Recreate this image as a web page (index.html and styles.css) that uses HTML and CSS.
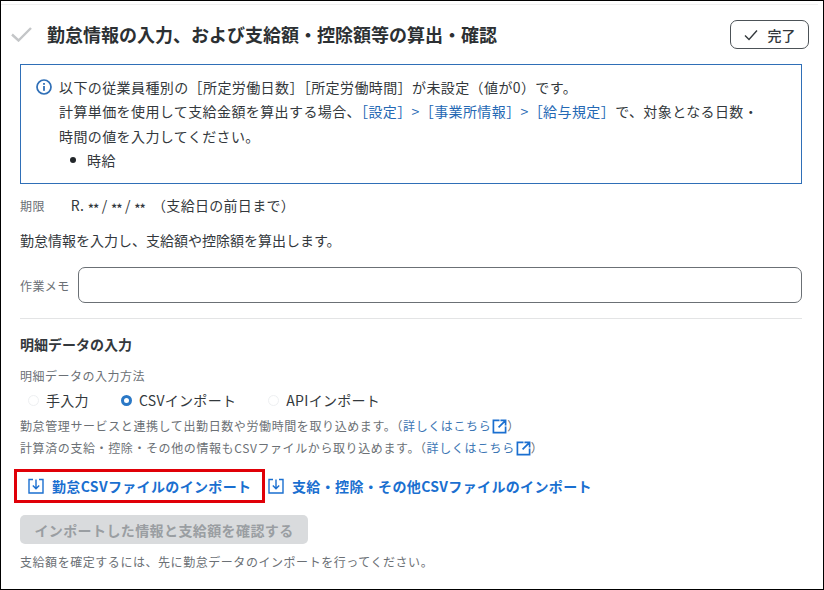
FILE: index.html
```html
<!DOCTYPE html>
<html lang="ja">
<head>
<meta charset="utf-8">
<title>勤怠情報の入力</title>
<link rel="stylesheet" href="styles.css">
</head>
<body>
<main class="frame">
  <header class="task-header">
    <svg class="task-check" viewBox="0 0 21 15" width="21" height="15"><path d="M1 7.5 L7.5 13.5 L20 1" fill="none" stroke="#c4c6c8" stroke-width="2.4"/></svg>
    <h1 class="task-title">勤怠情報の入力、および支給額・控除額等の算出・確認</h1>
    <button class="done-btn" type="button">
      <svg viewBox="0 0 14 12" width="14" height="12"><path d="M1 6.5 L5 10.5 L13 1.5" fill="none" stroke="#33383c" stroke-width="1.4"/></svg>
      <span>完了</span>
    </button>
  </header>

  <section class="notice">
    <svg class="notice-icon" viewBox="0 0 16 16" width="16" height="16"><circle cx="8" cy="8" r="7" fill="none" stroke="#2f6fb7" stroke-width="1.7"/><rect x="7.1" y="7" width="1.8" height="4.8" fill="#2f6fb7"/><rect x="7.1" y="4" width="1.8" height="1.8" fill="#2f6fb7"/></svg>
    <div class="notice-body">
      <p>以下の従業員種別の［所定労働日数］［所定労働時間］が未設定（値が0）です。</p>
      <p>計算単価を使用して支給金額を算出する場合、<a href="#">［設定］&gt;［事業所情報］&gt;［給与規定］</a>で、対象となる日数・<br>時間の値を入力してください。</p>
      <ul class="notice-list"><li>時給</li></ul>
    </div>
  </section>

  <div class="deadline">
    <span class="field-label">期限</span>
    <span class="deadline-value">R. <span class="mask">**</span> / <span class="mask">**</span> / <span class="mask">**</span>　（支給日の前日まで）</span>
  </div>
  <p class="lead">勤怠情報を入力し、支給額や控除額を算出します。</p>

  <div class="memo">
    <label class="field-label" for="memo">作業メモ</label>
    <input class="memo-input" id="memo" type="text">
  </div>

  <hr class="divider">

  <h2 class="section-title">明細データの入力</h2>
  <div class="method-label">明細データの入力方法</div>
  <div class="radios">
    <label class="radio"><span class="dot"></span>手入力</label>
    <label class="radio"><span class="dot is-on"></span>CSVインポート</label>
    <label class="radio"><span class="dot"></span>APIインポート</label>
  </div>
  <p class="help">勤怠管理サービスと連携して出勤日数や労働時間を取り込めます。（<a href="#">詳しくはこちら<svg class="ext" viewBox="0 0 16 16" width="16" height="16"><path d="M8 1.5 H1.5 V14.5 H14.5 V8 M9 1.5 H14.5 V7 M14 2 L7 9" fill="none" stroke="#1a6fd0" stroke-width="1.8"/></svg></a>）</p>
  <p class="help">計算済の支給・控除・その他の情報もCSVファイルから取り込めます。（<a href="#">詳しくはこちら<svg class="ext" viewBox="0 0 16 16" width="16" height="16"><path d="M8 1.5 H1.5 V14.5 H14.5 V8 M9 1.5 H14.5 V7 M14 2 L7 9" fill="none" stroke="#1a6fd0" stroke-width="1.8"/></svg></a>）</p>

  <div class="imports">
    <a class="import-link is-marked" href="#">
      <svg viewBox="0 0 16 16" width="16" height="16"><path d="M5 1.5 H1 V15 H15 V1.5 H11 M8 1.5 V10.5 M4.8 7.5 L8 10.8 L11.2 7.5" fill="none" stroke="#1a6fd0" stroke-width="1.4"/></svg>
      勤怠CSVファイルのインポート
    </a>
    <a class="import-link" href="#">
      <svg viewBox="0 0 16 16" width="16" height="16"><path d="M5 1.5 H1 V15 H15 V1.5 H11 M8 1.5 V10.5 M4.8 7.5 L8 10.8 L11.2 7.5" fill="none" stroke="#1a6fd0" stroke-width="1.4"/></svg>
      支給・控除・その他CSVファイルのインポート
    </a>
  </div>

  <button class="confirm-btn" type="button" disabled>インポートした情報と支給額を確認する</button>
  <p class="foot">支給額を確定するには、先に勤怠データのインポートを行ってください。</p>
</main>
</body>
</html>
```

FILE: styles.css
```css
* { box-sizing: border-box; }
html, body { margin: 0; height: 100%; }
body {
  font-family: "Noto Sans CJK JP", "Noto Sans", sans-serif;
  color: #33383c;
  background: #fff;
}
p, h1, h2, ul { margin: 0; padding: 0; }
a { color: #2468b4; text-decoration: none; }

.frame {
  width: 824px;
  height: 590px;
  border: 1px solid #000;
  padding: 0 21px 0 19px;
  overflow: hidden;
}

.task-header {
  display: flex;
  align-items: center;
  height: 60px;
  margin: 3px -16px 0 -19px;
  padding: 0 9px 0 10px;
  border-top: 1px solid #f0f0f0;
}
.task-check { flex: none; margin-right: 15px; }
.task-title { flex: 1; font-size: 18px; font-weight: 700; line-height: 26px; color: #2c3033; margin-bottom: 2px; }
.done-btn {
  display: flex;
  align-items: center;
  justify-content: center;
  gap: 10px;
  width: 79px;
  height: 29px;
  background: #fff;
  border: 1px solid #4c5257;
  border-radius: 7px;
  font: 500 14px "Noto Sans CJK JP", sans-serif;
  color: #33383c;
  padding: 0;
}

.notice {
  display: flex;
  width: 782px;
  height: 120px;
  padding: 10px 15px;
  border: 1px solid #2f6fb7;
}
.notice-icon { flex: none; margin: 4px 7px 0 0; }
.notice-body { font-size: 14px; line-height: 24.3px; letter-spacing: 0.4px; }
.notice-list { list-style: none; padding-left: 11px; }
.notice-list li { display: flex; align-items: center; }
.notice-list li::before {
  content: "";
  width: 6px;
  height: 6px;
  margin-right: 11px;
  border-radius: 50%;
  background: #22262a;
}

.deadline { display: flex; align-items: center; margin-top: 10px; height: 22px; }
.field-label { font-size: 12px; color: #6b7075; letter-spacing: 0.4px; }
.deadline-value { font-size: 14px; line-height: 22px; margin: 4px 0 0 26px; letter-spacing: 0.3px; }
.mask { font-size: 13px; font-weight: 500; vertical-align: -3px; letter-spacing: -1px; }
.lead { font-size: 14px; line-height: 22px; margin-top: 13px; }

.memo { display: flex; align-items: center; gap: 8px; margin-top: 16px; }
.memo-input { width: 724px; height: 36px; border: 1px solid #6b7075; border-radius: 7px; background: #fff; }

.divider { width: 782px; margin: 15px 0 0; border: 0; border-top: 1px solid #e3e4e5; }

.section-title { font-size: 14px; font-weight: 700; line-height: 22px; margin-top: 14px; }
.method-label { font-size: 12px; line-height: 18px; color: #6b7075; margin-top: 12px; letter-spacing: 0.5px; }

.radios { display: flex; margin-top: 4px; height: 22px; font-size: 14px; align-items: center; letter-spacing: 0.3px; }
.radio { display: flex; align-items: center; gap: 7px; margin-left: 8px; margin-right: 24px; }
.dot { width: 11px; height: 11px; border-radius: 50%; border: 1px solid #eef0f2; background: #fff; }
.dot.is-on { border: 3.5px solid #2a78c6; }

.help { font-size: 12px; line-height: 22px; color: #6b7075; letter-spacing: 0.6px; }
.radios + .help { margin-top: 3.5px; }
.help a { color: #3c76b4; }
.ext { width: 15px; height: 15px; vertical-align: -3px; margin-left: 1px; }

.imports { display: flex; align-items: center; margin-top: 10.5px; height: 34px; }
.import-link {
  display: flex;
  align-items: center;
  gap: 8px;
  height: 34px;
  font-size: 14px;
  font-weight: 700;
  color: #1a6fd0;
  letter-spacing: 0.35px;
}
.import-link.is-marked { border: 3px solid #e00008; width: 251px; margin-left: -6px; margin-right: 3px; padding-left: 11px; }
.confirm-btn {
  display: block;
  width: 288px;
  height: 29px;
  margin-top: 12px;
  border: 0;
  border-radius: 5px;
  background: #d9dbdd;
  color: #9a9ea2;
  font: 700 14px "Noto Sans CJK JP", sans-serif;
  letter-spacing: 0.4px;
  padding: 0;
}
.foot { font-size: 12px; line-height: 20px; color: #6b7075; margin-top: 8px; letter-spacing: 0.55px; }
```
